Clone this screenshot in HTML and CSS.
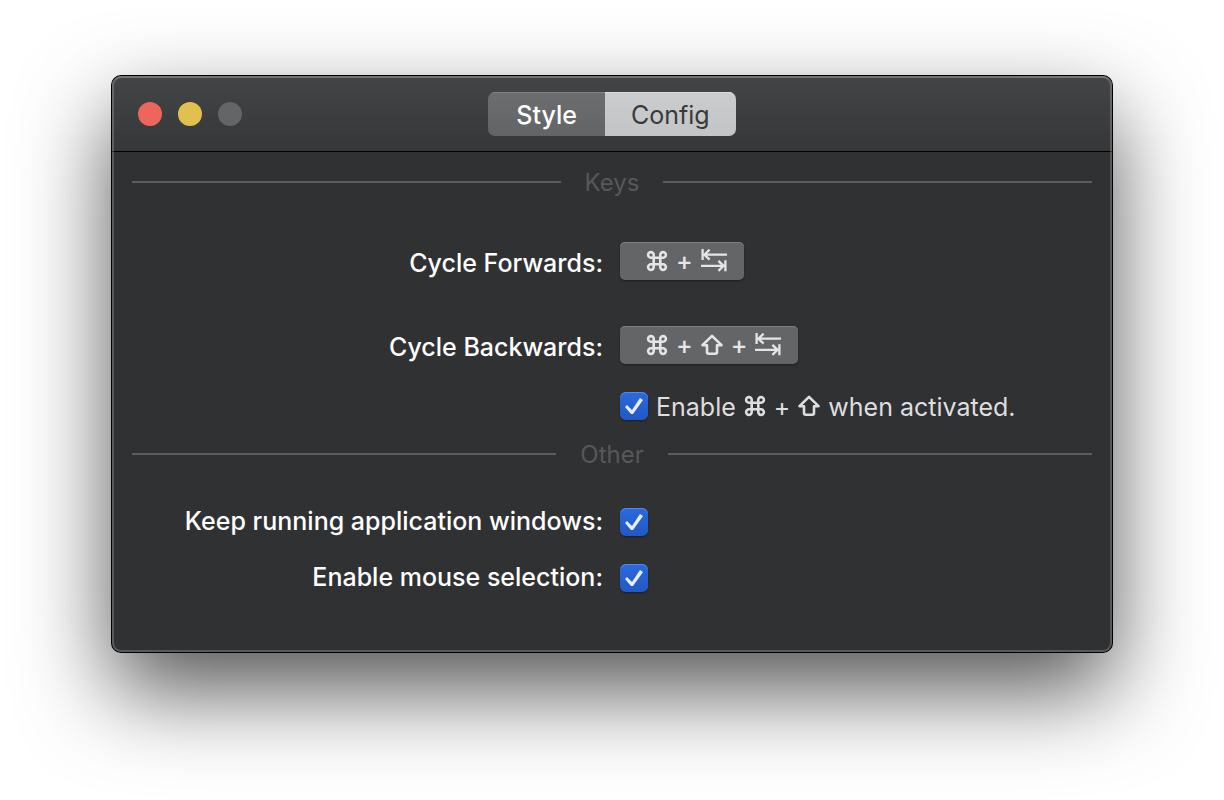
FILE: index.html
```html
<!DOCTYPE html>
<html lang="en">
<head>
<meta charset="utf-8">
<title>Preferences</title>
<link rel="stylesheet" href="styles.css">
</head>
<body>
<svg class="symbols" aria-hidden="true">
  <symbol id="command" viewBox="0 0 22 22">
    <path d="M7.7 7.7h6.6v6.6H7.7zM7.7 7.7H5a2.8 2.8 0 1 1 2.7-2.7zM14.3 7.7V5a2.8 2.8 0 1 1 2.7 2.7zM14.3 14.3H17a2.8 2.8 0 1 1-2.7 2.7zM7.7 14.3V17A2.8 2.8 0 1 1 5 14.3z"/>
  </symbol>
  <symbol id="shift" viewBox="0 0 22 22">
    <path stroke-linejoin="round" d="M11 1.8 1.5 11.2H6V18q0 1.7 1.7 1.7h6.6Q16 19.7 16 18v-6.8h4.5z"/>
  </symbol>
  <symbol id="tab" viewBox="0 0 26 24">
    <path d="M1.6 0v11M3 5.7h23M8.6.7l-5.2 5 5.2 5M24.4 11.3v11M0 16.8h23M17.4 11.8l5.2 5-5.2 5"/>
  </symbol>
</svg>
<main class="window">
  <header class="titlebar">
    <div class="lights">
      <button class="light close" aria-label="Close"></button>
      <button class="light minimize" aria-label="Minimize"></button>
      <button class="light zoom" aria-label="Zoom" disabled></button>
    </div>
    <nav class="tabs">
      <button class="tab">Style</button>
      <button class="tab selected" aria-pressed="true">Config</button>
    </nav>
  </header>
  <div class="content">
    <h2 class="divider"><span>Keys</span></h2>
    <section class="form keys">
      <label for="forwards">Cycle Forwards:</label>
      <button class="shortcut" id="forwards"><svg class="icon"><use href="#command"/></svg><span>+</span><svg class="icon wide"><use href="#tab"/></svg></button>
      <label for="backwards">Cycle Backwards:</label>
      <button class="shortcut" id="backwards"><svg class="icon"><use href="#command"/></svg><span>+</span><svg class="icon"><use href="#shift"/></svg><span>+</span><svg class="icon wide"><use href="#tab"/></svg></button>
    </section>
    <div class="form option">
      <label class="check"><input type="checkbox" checked><span>Enable</span><svg class="icon"><use href="#command"/></svg><span>+</span><svg class="icon"><use href="#shift"/></svg><span>when activated.</span></label>
    </div>
    <h2 class="divider"><span>Other</span></h2>
    <section class="form other">
      <label for="keep">Keep running application windows:</label>
      <input type="checkbox" id="keep" checked>
      <label for="mouse">Enable mouse selection:</label>
      <input type="checkbox" id="mouse" checked>
    </section>
  </div>
</main>
</body>
</html>
```
FILE: styles.css
```css
* { box-sizing: border-box; }

body {
  margin: 0;
  padding: 76px 112px 148px;
  background: #fff;
  color: #fff;
  font: 25px/28px Inter, "Liberation Sans", sans-serif;
}

button {
  margin: 0;
  padding: 0;
  border: 0;
  font: inherit;
}

.symbols { position: absolute; width: 0; height: 0; }

.window {
  position: relative;
  border-radius: 9px;
  background: #303133;
  box-shadow: 0 0 0 1px #000, 0 38px 90px rgba(0, 0, 0, 0.68);
}

/* Light rim along the inside edge of the window */
.window::after {
  content: "";
  position: absolute;
  inset: 0;
  border: 2px solid rgba(255, 255, 255, 0.2);
  border-top-color: rgba(255, 255, 255, 0.26);
  border-radius: 9px;
  pointer-events: none;
}

.titlebar {
  display: grid;
  grid-template-columns: 1fr auto 1fr;
  align-items: center;
  height: 76px;
  padding: 0 26px;
  border-bottom: 1px solid #000;
  border-radius: 9px 9px 0 0;
  background: linear-gradient(#444547, #363739);
}

.lights { display: flex; gap: 16px; }
.light { width: 24px; height: 24px; border-radius: 50%; }
.close { background: #ee655b; }
.minimize { background: #e1c04d; }
.zoom { background: #646567; }

.tabs { display: flex; border-radius: 7px; overflow: hidden; }

.tab {
  height: 44px;
  padding: 2px 28px 0;
  background: linear-gradient(#6c6d6f, #636466);
  box-shadow: inset 0 1px #828385;
  color: #fff;
  font-weight: 500;
}

.tab.selected {
  padding: 2px 26px 0;
  background: linear-gradient(#cbccce, #c3c4c6);
  box-shadow: inset 0 1px #dcdddf;
  color: #39393b;
  font-weight: 400;
}

.content { padding: 15px 20px 60px; }

.divider {
  display: flex;
  align-items: center;
  gap: 24px;
  margin: 0;
  color: #57585a;
  font-size: 24px;
  font-weight: 400;
}

.divider span { padding-top: 2px; }

.divider::before,
.divider::after {
  content: "";
  flex: 1;
  height: 2px;
  background: #5c5d5f;
}

.form {
  display: grid;
  grid-template-columns: 1fr 1fr;
  column-gap: 16px;
  align-items: center;
  justify-items: start;
}

.form > label:not(.check) {
  justify-self: end;
  padding-right: 1px;
  font-weight: 500;
  white-space: nowrap;
}

.keys { row-gap: 46px; padding-top: 45px; }
.keys > label:not(.check) { padding-top: 4px; }
.option { padding: 27px 0 18px; }
.other { row-gap: 28px; padding-top: 39px; }
.other > label:not(.check) { margin-top: -2px; }

.shortcut {
  display: flex;
  align-items: center;
  gap: 8px;
  height: 38px;
  padding: 0 17px 0 26px;
  border-radius: 5px;
  background: #646567;
  box-shadow: inset 0 1px #7e7f81, 0 1px 2px rgba(0, 0, 0, 0.4);
  color: #e5e5e6;
  font-weight: 500;
}

.icon {
  flex: none;
  width: 22px;
  height: 22px;
  fill: none;
  stroke: currentColor;
  stroke-width: 2.6;
}

.icon.wide { width: 26px; height: 24px; stroke-width: 2.3; }

.check {
  grid-column: 2;
  display: flex;
  align-items: center;
  gap: 8px;
  color: #dededf;
  white-space: nowrap;
}

.check span { padding-top: 2px; }

input[type="checkbox"] {
  appearance: none;
  display: block;
  width: 28px;
  height: 28px;
  margin: 0;
  border-radius: 6px;
  background: linear-gradient(#2b69dd, #2259c4);
  box-shadow: inset 0 1px #5488e5, 0 1px 2px rgba(0, 0, 0, 0.4);
}

input[type="checkbox"]:checked::before {
  content: "";
  display: block;
  width: 28px;
  height: 28px;
  background: #e8edfa;
  clip-path: polygon(5px 15px, 7px 13px, 12px 18px, 20px 6px, 23px 8px, 13px 22px, 11px 22px);
}
```
